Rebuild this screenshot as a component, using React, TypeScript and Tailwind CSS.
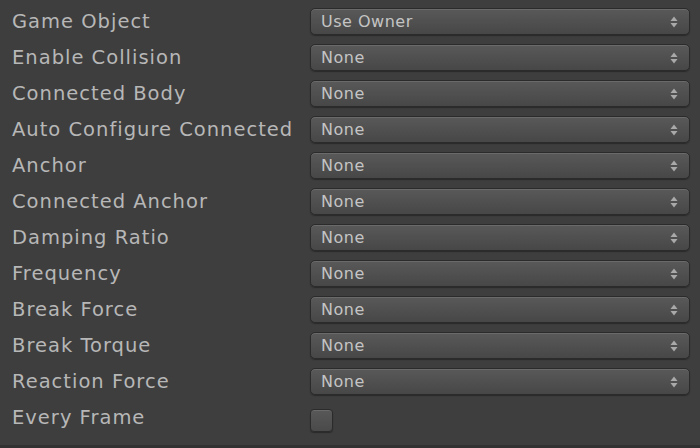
import React from 'react';

const rows = [
  { label: 'Game Object', value: 'Use Owner' },
  { label: 'Enable Collision', value: 'None' },
  { label: 'Connected Body', value: 'None' },
  { label: 'Auto Configure Connected', value: 'None' },
  { label: 'Anchor', value: 'None' },
  { label: 'Connected Anchor', value: 'None' },
  { label: 'Damping Ratio', value: 'None' },
  { label: 'Frequency', value: 'None' },
  { label: 'Break Force', value: 'None' },
  { label: 'Break Torque', value: 'None' },
  { label: 'Reaction Force', value: 'None' },
];

function Arrows() {
  return (
    <svg width="8" height="12" viewBox="0 0 8 12" className="text-[#a9a9a9]">
      <path d="M4 0.5 L7.5 5 L0.5 5 Z" fill="currentColor" />
      <path d="M4 11.5 L7.5 7 L0.5 7 Z" fill="currentColor" />
    </svg>
  );
}

function Dropdown({ value }: { value: string }) {
  return (
    <div className="flex-1 h-[27px] flex items-center justify-between pl-[10px] pr-[11px] rounded-[5px] border border-[#2b2b2b] bg-gradient-to-b from-[#595959] to-[#474747] shadow-[inset_0_1px_0_#6a6a6a,0_1px_1px_#2a2a2a] text-[16px] tracking-[0.5px] text-[#c4c4c4]">
      <span className="leading-none">{value}</span>
      <Arrows />
    </div>
  );
}

export default function App() {
  return (
    <div
      className="w-[700px] h-[448px] bg-[#3e3e3e] flex flex-col border-b-[3px] border-[#323232]"
      style={{ fontFamily: '"DejaVu Sans", "Open Sans", sans-serif' }}
    >
      <div className="flex flex-col gap-[9px] pt-[8px] pr-[10px]">
        {rows.map((r) => (
          <div key={r.label} className="flex items-center h-[27px]">
            <div className="w-[310px] pl-[12px] text-[19.5px] tracking-[1px] text-[#b7b7b7] whitespace-nowrap">{r.label}</div>
            <Dropdown value={r.value} />
          </div>
        ))}
        <div className="flex items-center h-[27px]">
          <div className="w-[310px] pl-[12px] text-[19.5px] tracking-[1px] text-[#b7b7b7] whitespace-nowrap">Every Frame</div>
          <div className="w-[23px] h-[23px] mt-[6px] rounded-[4px] border border-[#2b2b2b] bg-gradient-to-b from-[#585858] to-[#4a4a4a] shadow-[inset_0_1px_0_#6a6a6a,0_1px_1px_#2a2a2a]" />
        </div>
      </div>
    </div>
  );
}
